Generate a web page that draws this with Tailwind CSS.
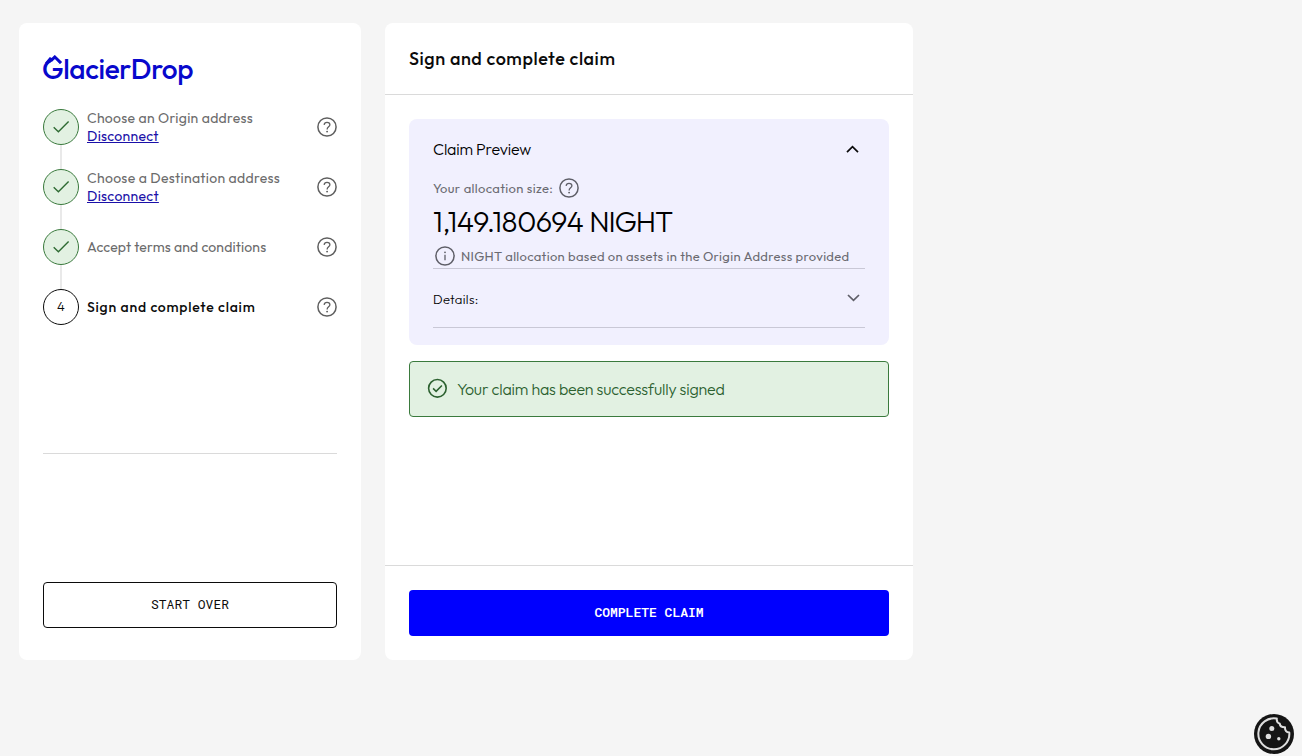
<!DOCTYPE html>
<html lang="en">
<head>
    <meta charset="UTF-8">
    <meta name="viewport" content="width=device-width, initial-scale=1.0">
    <title>GlacierDrop - Sign and complete claim</title>
    <script src="https://cdn.jsdelivr.net/npm/@tailwindcss/browser@4"></script>
</head>
<body class="h-[756px] overflow-hidden bg-[#f5f5f5] font-['Outfit','Lato',sans-serif] font-normal text-[#0b0b0b]">
    <!-- Shared icons -->
    <svg class="hidden">
        <symbol id="help" viewBox="0 0 20 20">
            <circle cx="10" cy="10" r="9.1" fill="none" stroke="currentColor" stroke-width="1.5"/>
            <path d="M7.1 7.8C7.3 6.2 8.5 5.3 10 5.3c1.7 0 2.9 1.1 2.9 2.5 0 2-2.8 2.2-2.8 4.6" fill="none" stroke="currentColor" stroke-width="1.3"/>
            <circle cx="10.1" cy="14.6" r=".95" fill="currentColor"/>
        </symbol>
        <symbol id="check" viewBox="0 0 36 36">
            <path d="M10.7 18.2l4.7 4.6L25.6 12.5" fill="none" stroke="currentColor" stroke-width="1.4"/>
        </symbol>
    </svg>

    <main class="flex gap-6 pl-[19px] pt-[23px]">
        <!-- Sidebar -->
        <aside class="flex h-[637px] w-[342px] flex-col rounded-lg bg-white px-6 pb-8 pt-8">
            <div class="relative h-[54px] text-[#0808cc]">
                <span class="-ml-px block w-max text-[28px] font-medium leading-[28px] tracking-[-0.37px]">GlacierDrop</span>
                <!-- Glacier peaks on top of the G -->
                <svg class="absolute left-0 top-0 h-[26px] w-[24px]" viewBox="0 0 24 26" fill="none">
                    <path d="M6 9.5L11.8 3l5.4 6.5z" fill="#fff"/>
                    <path d="M3.2 8.8L7.2 4l1.6.9L11.8 2l6.3 6" stroke="currentColor" stroke-width="3"/>
                </svg>
            </div>

            <ol>
                <li class="flex h-9 items-center">
                    <span class="size-9 rounded-full border border-[#3a7a3d] bg-[#e2f1e2] text-[#2f6b33]"><svg class="-m-px size-9"><use href="#check"/></svg></span>
                    <div class="ml-2 flex-1 text-sm leading-[18px] tracking-[0.28px] text-[#6b6b6b]">
                        <p>Choose an Origin address</p>
                        <a href="#" class="text-[#1a10a8] underline">Disconnect</a>
                    </div>
                    <svg class="size-5 text-[#5f5f5f]"><use href="#help"/></svg>
                </li>
                <li class="ml-[17px] h-6 w-0.5 bg-[#e9e9e9]"></li>
                <li class="flex h-9 items-center">
                    <span class="size-9 rounded-full border border-[#3a7a3d] bg-[#e2f1e2] text-[#2f6b33]"><svg class="-m-px size-9"><use href="#check"/></svg></span>
                    <div class="ml-2 flex-1 text-sm leading-[18px] tracking-[0.3px] text-[#6b6b6b]">
                        <p>Choose a Destination address</p>
                        <a href="#" class="text-[#1a10a8] underline">Disconnect</a>
                    </div>
                    <svg class="size-5 text-[#5f5f5f]"><use href="#help"/></svg>
                </li>
                <li class="ml-[17px] h-6 w-0.5 bg-[#e9e9e9]"></li>
                <li class="flex h-9 items-center">
                    <span class="size-9 rounded-full border border-[#3a7a3d] bg-[#e2f1e2] text-[#2f6b33]"><svg class="-m-px size-9"><use href="#check"/></svg></span>
                    <div class="ml-2 flex-1 text-sm leading-[18px] tracking-[0.14px] text-[#6b6b6b]">
                        <p>Accept terms and conditions</p>
                    </div>
                    <svg class="size-5 text-[#5f5f5f]"><use href="#help"/></svg>
                </li>
                <li class="ml-[17px] h-6 w-0.5 bg-[#e9e9e9]"></li>
                <li class="flex h-9 items-center">
                    <span class="flex size-9 items-center justify-center rounded-full border border-[#0b0b0b] text-[13px] font-light">4</span>
                    <div class="ml-2 flex-1 text-sm font-medium leading-[18px] tracking-[0.78px]">
                        <p>Sign and complete claim</p>
                    </div>
                    <svg class="size-5 text-[#5f5f5f]"><use href="#help"/></svg>
                </li>
            </ol>

            <hr class="mt-32 border-[#dadada]">
            <button class="mt-auto h-[46px] rounded border border-[#0b0b0b] font-['Roboto_Mono','Liberation_Mono',monospace] text-[13px] font-normal">START OVER</button>
        </aside>

        <!-- Claim panel -->
        <section class="flex h-[637px] w-[528px] flex-col rounded-lg bg-white">
            <h1 class="flex h-[72px] items-center border-b border-[#dadada] px-6 text-lg font-medium tracking-[0.56px]">Sign and complete claim</h1>

            <div class="flex-1 px-6 pt-6">
                <div class="h-[226px] rounded-lg bg-[#f1f0fe] px-6 pt-[18px]">
                    <div class="flex h-6 items-center justify-between pr-1.5">
                        <h2 class="text-base font-light tracking-[-0.2px] text-black">Claim Preview</h2>
                        <svg class="h-3 w-[13px]" viewBox="0 0 13 12" fill="none" stroke="currentColor" stroke-width="1.7"><path d="M1 9.1l5.5-5.4L12 9.1"/></svg>
                    </div>
                    <div class="mt-4 flex h-6 items-center text-[13px] tracking-[0.34px] text-[#6b6b72]">
                        <span>Your allocation size:</span>
                        <svg class="ml-1.5 size-5 -translate-y-px text-[#5f5f68]"><use href="#help"/></svg>
                    </div>
                    <p class="text-[29px] font-light leading-[42px] tracking-[-0.42px] text-black">1,149.180694 <span class="tracking-[-1.1px]">NIGHT</span></p>
                    <div class="flex h-[26px] items-center border-b border-[#c9c8d6] pl-0.5 text-[13px] tracking-[0.31px] text-[#6b6b72]">
                        <svg class="mr-1.5 size-5 text-[#5f5f68]" viewBox="0 0 20 20">
                            <circle cx="10" cy="10" r="9.1" fill="none" stroke="currentColor" stroke-width="1.5"/>
                            <path d="M10 8.7v5.6" stroke="currentColor" stroke-width="1.3"/>
                            <circle cx="10" cy="6.3" r=".9" fill="currentColor"/>
                        </svg>
                        <span class="pt-0.5">NIGHT allocation based on assets in the Origin Address provided</span>
                    </div>
                    <div class="flex h-[59px] items-center justify-between border-b border-[#c9c8d6] pr-[5px] text-[13px] tracking-[0.33px]">
                        <span class="pt-1 font-light text-black">Details:</span>
                        <svg class="h-3 w-[13px] text-[#5f5f68]" viewBox="0 0 13 12" fill="none" stroke="currentColor" stroke-width="1.7"><path d="M1 3l5.5 5.4L12 3"/></svg>
                    </div>
                </div>

                <div class="mt-4 flex h-14 items-center rounded border border-[#3a7a3d] bg-[#e2f1e2] pl-[17px] text-base font-light tracking-[-0.2px] text-[#2c6130]">
                    <svg class="mr-2.5 size-5 -translate-y-px" viewBox="0 0 20 20" fill="none" stroke="currentColor" stroke-width="1.6">
                        <circle cx="10.4" cy="10.3" r="8.8"/>
                        <path d="M6.1 10.4l3 2.9 5.8-5.8"/>
                    </svg>
                    <span>Your claim has been successfully signed</span>
                </div>
            </div>

            <div class="border-t border-[#dadada] p-6">
                <button class="h-[46px] w-full rounded bg-[#0000fe] font-['Roboto_Mono','Liberation_Mono',monospace] text-[13px] font-semibold text-white">COMPLETE CLAIM</button>
            </div>
        </section>
    </main>

    <!-- Cookie settings -->
    <button class="absolute left-[1254px] top-[714px] size-10">
        <svg viewBox="0 0 40 40">
            <circle cx="20" cy="20" r="20" fill="#151515"/>
            <path d="M22.8 4.6A15.5 15.5 0 1 0 35.3 18.6C32.6 18.3 30.8 16.2 31 13.2C28.2 13.3 26 12.2 25.8 9.8C23.6 9 22.5 7 22.8 4.6z" fill="none" stroke="#dedede" stroke-width="2" stroke-linejoin="round"/>
            <circle cx="17.8" cy="14.4" r="2.5" fill="#dedede"/>
            <circle cx="14.4" cy="22.4" r="2.7" fill="#dedede"/>
            <circle cx="24.8" cy="24.8" r="1.7" fill="#dedede"/>
        </svg>
    </button>
</body>
</html>
